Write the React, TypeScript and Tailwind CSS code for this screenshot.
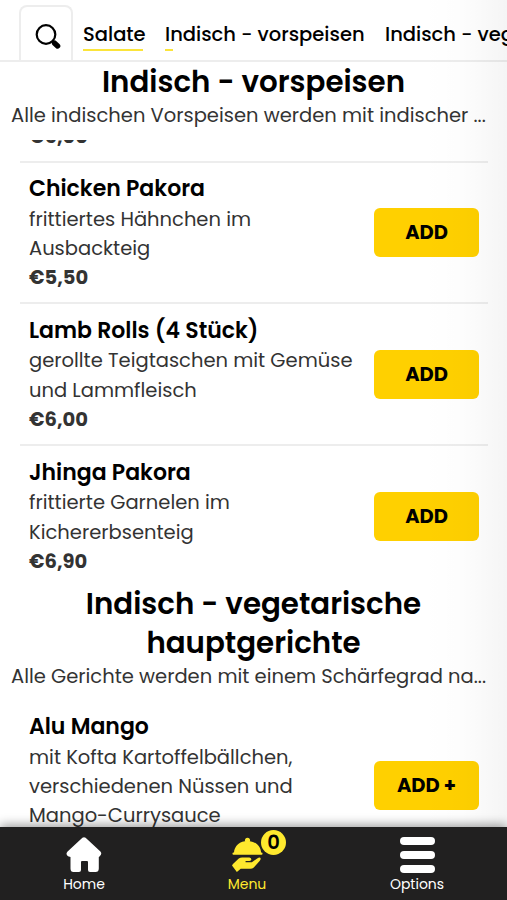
import { clsx } from 'clsx'

const dishes = [
  {
    name: 'Chicken Pakora',
    lines: ['frittiertes Hähnchen im', 'Ausbackteig'],
    price: '€5,50',
  },
  {
    name: 'Lamb Rolls (4 Stück)',
    lines: ['gerollte Teigtaschen mit Gemüse', 'und Lammfleisch'],
    price: '€6,00',
  },
  {
    name: 'Jhinga Pakora',
    lines: ['frittierte Garnelen im', 'Kichererbsenteig'],
    price: '€6,90',
  },
]

const mango = {
  name: 'Alu Mango',
  lines: ['mit Kofta Kartoffelbällchen,', 'verschiedenen Nüssen und', 'Mango-Currysauce'],
  price: '€9,90',
}

type DishProps = { dish: typeof mango; action?: string; className?: string }

function Dish({ dish, action = 'ADD', className }: DishProps) {
  return (
    <div className={clsx('ml-5 mr-[19px] flex shrink-0 items-center justify-between px-[9px]', className)}>
      <div className="whitespace-nowrap pt-px text-[19.5px] leading-[29.2px] text-[#333]">
        <h3 className="mb-[0.6px] text-[22px] font-semibold leading-[30px] text-black">{dish.name}</h3>
        {dish.lines.map((line) => (
          <p key={line}>{line}</p>
        ))}
        <p className="font-bold">{dish.price}</p>
      </div>
      <button className="h-[49px] w-[105px] shrink-0 rounded-md bg-[#ffd000] text-[19.5px] font-bold text-black">
        {action}
      </button>
    </div>
  )
}

export default function App() {
  return (
    <div className="relative flex h-[900px] w-[507px] flex-col overflow-hidden bg-white font-['Poppins','Inter',sans-serif] text-black">
      {/* Category tabs */}
      <header className="flex h-[62px] shrink-0 items-end border-b-2 border-[#ededed] pl-[19px]">
        <button className="flex h-[55px] w-[54px] shrink-0 items-center justify-center rounded-t-lg border-2 border-b-0 border-[#ededed]">
          <svg className="ml-[3px] mt-[6px] size-[26px]" viewBox="0 0 26 26" fill="none" stroke="#000">
            <circle cx="11" cy="10.5" r="9.3" strokeWidth="2.2" />
            <path d="M17.5 17l1.6 1.6" strokeWidth="2.6" />
            <path d="M19.6 19.2l3 2.8" strokeWidth="5.4" strokeLinecap="round" />
          </svg>
        </button>
        <nav className="ml-[10px] flex h-[40px] whitespace-nowrap text-[19.5px] font-medium leading-[29px]">
          <div className="w-[82px] shrink-0">
            <a>Salate</a>
            <div className="h-[2px] w-[60px] bg-[#fbe43a]" />
          </div>
          <div className="w-[220px] shrink-0">
            <a>Indisch - vorspeisen</a>
            <div className="h-[2px] w-[8px] bg-[#fbe43a]" />
          </div>
          <a>Indisch - vegetarische hauptgerichte</a>
        </nav>
      </header>

      {/* Current category */}
      <section className="h-[78px] shrink-0 whitespace-nowrap text-center">
        <h2 className="text-[29.3px] font-semibold leading-[39px]">Indisch - vorspeisen</h2>
        <p className="pl-[11px] text-left text-[19.5px] leading-[29px] text-[#333]">
          Alle indischen Vorspeisen werden mit indischer ...
        </p>
      </section>

      {/* Scrolled menu */}
      <main className="flex flex-1 flex-col overflow-hidden">
        <div className="ml-5 mr-[19px] h-[23px] shrink-0 overflow-hidden border-b-2 border-[#ededed] pl-[9px]">
          <p className="-mt-[18px] text-[19.5px] font-bold leading-[29px] text-[#333]">€6,00</p>
        </div>
        <Dish dish={dishes[0]} className="h-[141.4px] border-b-2 border-[#ededed]" />
        <Dish dish={dishes[1]} className="h-[142px] border-b-2 border-[#ededed]" />
        <Dish dish={dishes[2]} className="h-[140px]" />
        <h2 className="-mt-[2.4px] shrink-0 text-center text-[29.3px] font-semibold leading-[39px]">
          <span className="block">Indisch - vegetarische</span>
          <span className="block">hauptgerichte</span>
        </h2>
        <p className="shrink-0 whitespace-nowrap pl-[11px] text-[19.5px] leading-[29px] text-[#333]">
          Alle Gerichte werden mit einem Schärfegrad na...
        </p>
        <Dish dish={mango} action="ADD +" className="mt-5" />
      </main>

      {/* Soft shade on the right edge */}
      <div className="pointer-events-none absolute bottom-[73px] right-0 top-0 w-[85px] bg-linear-to-r from-transparent via-black/1 to-black/4" />

      {/* Bottom bar */}
      <footer className="absolute inset-x-0 bottom-0 flex h-[73px] bg-[#212020] text-[14px] leading-[20px] text-white shadow-[0_-2px_10px_rgba(0,0,0,0.4)]">
        <div className="flex w-[168px] shrink-0 flex-col items-center pt-[9px]">
          <svg className="h-[37px] w-[36px]" viewBox="0 0 36 37" fill="#fff">
            <path d="M16.4 1.8Q18 .7 19.6 1.8L34.4 15.5Q36.4 18 33.8 20.2L32.8 21V32.5Q32.8 36 29.5 36H24Q22 36 22 34V26Q22 25 21 25H16Q15 25 15 26V34Q15 36 13 36H7.5Q4.5 36 4.5 32.5V21L2 20.2Q-.8 18 1.6 15.5Z" />
          </svg>
          <span className="mt-[1px]">Home</span>
        </div>
        <div className="flex w-[158px] shrink-0 flex-col items-center pt-[4px] text-[#ffe92e]">
          <div className="relative h-[42px] w-[32px]">
            <svg className="absolute left-[1px] top-[6px] h-[36px] w-[31px]" viewBox="0 0 32 36" preserveAspectRatio="none" fill="currentColor">
              <circle cx="16" cy="3.3" r="2.6" />
              <path d="M2 16.4C2 8.5 8.5 4 16 4S30 8.5 30 16.4Z" />
              <rect x="0.5" y="15.6" width="31" height="2.2" rx="1" />
              <path d="M1 27L7 21.5Q8.5 20.5 10.5 20.5H18Q20 20.8 20 22.6 19.8 24 18 24H14V25.2H20.5L26 21.4Q29 19.8 29.6 21.4 29.8 22.6 28.5 24L22.5 30.4Q21 31.8 19 31.8H9L5 35 0 28.5Z" />
            </svg>
            <span className="absolute left-[30px] top-[-1px] flex size-[25px] items-center justify-center rounded-full bg-[#ffe92e] text-[19.5px] font-semibold leading-none text-black">
              0
            </span>
          </div>
          <span className="mt-[1px]">Menu</span>
        </div>
        <div className="flex w-[182px] shrink-0 flex-col items-center pt-[10px]">
          <div className="flex h-[36px] w-[35px] flex-col justify-between">
            <div className="h-[8px] rounded-full bg-white" />
            <div className="h-[8px] rounded-full bg-white" />
            <div className="h-[8px] rounded-full bg-white" />
          </div>
          <span className="mt-[1px]">Options</span>
        </div>
      </footer>
    </div>
  )
}
